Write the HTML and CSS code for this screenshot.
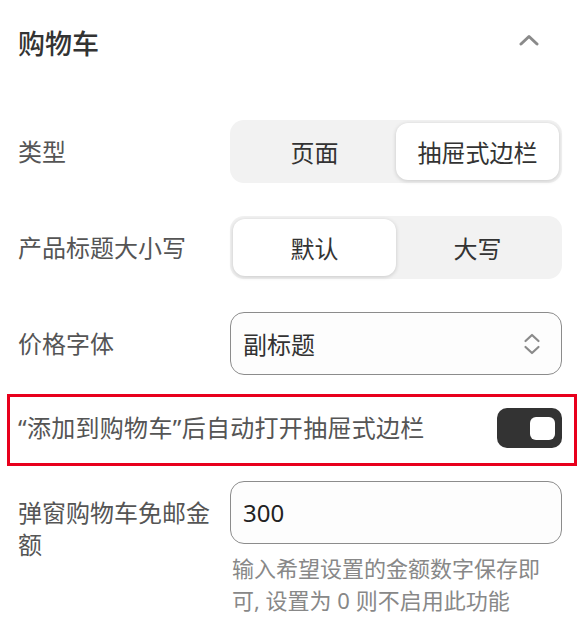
FILE: index.html
```html
<!DOCTYPE html>
<html>
<head>
	<title>购物车设置</title>
	<meta charset="utf-8">
	<link rel="stylesheet" href="styles.css">
</head>
<body>
	<div class="panel">
		<div class="head">
			<h2>购物车</h2>
			<svg class="fold" width="20" height="12" viewBox="0 0 20 12">
				<path d="M2 10 L10 2.5 L18 10" fill="none" stroke="#8a8a8a" stroke-width="3" stroke-linecap="round" stroke-linejoin="round"/>
			</svg>
		</div>
		<div class="list">
			<div class="row">
				<span class="label">类型</span>
				<div class="seg">
					<span class="opt">页面</span>
					<span class="opt on">抽屉式边栏</span>
				</div>
			</div>
			<div class="row">
				<span class="label">产品标题大小写</span>
				<div class="seg">
					<span class="opt on">默认</span>
					<span class="opt">大写</span>
				</div>
			</div>
			<div class="row">
				<span class="label">价格字体</span>
				<div class="select">
					<span>副标题</span>
					<svg width="18" height="24" viewBox="0 0 18 24">
						<path d="M2.5 9 L9 3 L15.5 9 M2.5 15 L9 21 L15.5 15" fill="none" stroke="#8a8a8a" stroke-width="2.2" stroke-linecap="round" stroke-linejoin="round"/>
					</svg>
				</div>
			</div>
			<div class="row marked">
				<span class="label wide">“添加到购物车”后自动打开抽屉式边栏</span>
				<span class="switch"><span class="knob"></span></span>
			</div>
			<div class="row top">
				<span class="label">弹窗购物车免邮金额</span>
				<div class="field">
					<div class="input">300</div>
					<p class="hint">输入希望设置的金额数字保存即可, 设置为 0 则不启用此功能</p>
				</div>
			</div>
		</div>
	</div>
</body>
</html>
```

FILE: styles.css
```css
body {
	margin: 0;
	background: #fff;
	font-family: "Noto Sans", "Noto Sans CJK SC", sans-serif;
	color: #555;
}

.panel {
	padding: 0 20px 0 18px;
}

.head {
	height: 84px;
	display: flex;
	align-items: center;
	justify-content: space-between;
}

	.head h2 {
		margin: 0;
		font-size: 27px;
		font-weight: 500;
		color: #333;
	}

.fold {
	margin-right: 23px;
	margin-top: -4px;
}

.list {
	padding-top: 36px;
	display: flex;
	flex-direction: column;
	gap: 33px;
}

.row {
	display: flex;
	align-items: center;
	position: relative;
}

	.row.top {
		align-items: flex-start;
	}

.label {
	width: 200px;
	margin-right: 12px;
	flex-shrink: 0;
	font-size: 24px;
	line-height: 32px;
}

	.label.wide {
		width: auto;
		flex: 1;
		letter-spacing: 0.3px;
	}

.row.top .label {
	margin-top: 16px;
}

.seg {
	flex: 1;
	display: flex;
	height: 63px;
	padding: 3px;
	box-sizing: border-box;
	background: #f2f2f2;
	border-radius: 14px;
}

.opt {
	flex: 1;
	display: flex;
	align-items: center;
	justify-content: center;
	font-size: 24px;
	color: #333;
	border-radius: 12px;
}

	.opt.on {
		background: #fff;
		box-shadow: 0 1px 4px rgba(0,0,0,0.18);
	}

.select, .input {
	flex: 1;
	height: 63px;
	box-sizing: border-box;
	border: 1px solid #8c8c8c;
	border-radius: 14px;
	background: #fdfdfd;
	display: flex;
	align-items: center;
	padding: 0 20px 0 12px;
	font-size: 24px;
	color: #333;
}

.select {
	justify-content: space-between;
}

.field {
	flex: 1;
}

.input {
	color: #222;
}

.hint {
	margin: 8px 12px 0 2px;
	font-size: 22px;
	line-height: 32px;
	color: #888;
}

.switch {
	width: 65px;
	height: 40px;
	background: #333;
	border-radius: 10px;
	display: flex;
	align-items: center;
	justify-content: flex-end;
	padding-right: 7px;
	box-sizing: border-box;
}

.knob {
	width: 25px;
	height: 23px;
	background: #fff;
	border-radius: 6px;
}

.marked::after {
	content: "";
	position: absolute;
	top: -14px;
	bottom: -18px;
	left: -11px;
	right: -15px;
	border: 3px solid #e8001c;
}
```
